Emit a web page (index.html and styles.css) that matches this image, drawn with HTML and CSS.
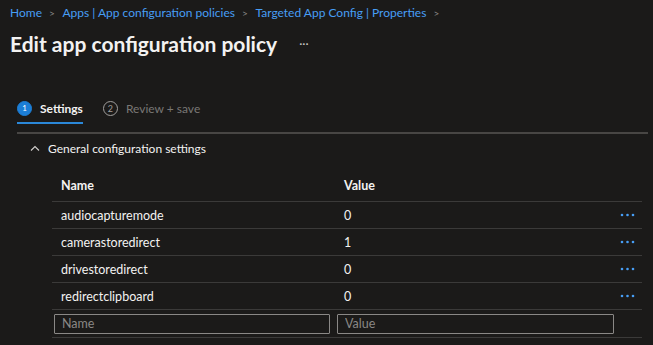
FILE: index.html
```html
<!DOCTYPE html>
<html lang="en">

<head>
    <meta charset="UTF-8">
    <meta name="viewport" content="width=device-width, initial-scale=1.0">
    <title>Edit app configuration policy</title>
    <link rel="stylesheet" href="styles.css">
</head>

<body>
    <!-- Breadcrumb -->
    <nav class="breadcrumb">
        <a href="#">Home</a><span class="sep">&gt;</span>
        <a href="#">Apps | App configuration policies</a><span class="sep">&gt;</span>
        <a href="#">Targeted App Config | Properties</a><span class="sep">&gt;</span>
    </nav>

    <div class="title-row">
        <h1>Edit app configuration policy</h1>
        <span class="more">&middot;&middot;&middot;</span>
    </div>

    <!-- Wizard steps -->
    <div class="steps">
        <div class="step active">
            <span class="num">1</span>
            <span class="label">Settings</span>
        </div>
        <div class="step">
            <span class="num">2</span>
            <span class="label">Review + save</span>
        </div>
    </div>

    <div class="content">
        <div class="section-head">
            <svg class="chevron" width="10" height="6" viewBox="0 0 10 6">
                <path d="M1 5.5 L5 1.5 L9 5.5" fill="none" stroke="#d2d0ce" stroke-width="1.1" />
            </svg>
            <span>General configuration settings</span>
        </div>

        <div class="grid">
            <div class="row head">
                <div class="cell">Name</div>
                <div class="cell">Value</div>
                <div class="cell"></div>
            </div>
            <div class="row">
                <div class="cell">audiocapturemode</div>
                <div class="cell">0</div>
                <div class="cell dots"><svg width="16" height="4" viewBox="0 0 16 4"><circle cx="2" cy="2" r="1.3"/><circle cx="7.5" cy="2" r="1.3"/><circle cx="13" cy="2" r="1.3"/></svg></div>
            </div>
            <div class="row">
                <div class="cell">camerastoredirect</div>
                <div class="cell">1</div>
                <div class="cell dots"><svg width="16" height="4" viewBox="0 0 16 4"><circle cx="2" cy="2" r="1.3"/><circle cx="7.5" cy="2" r="1.3"/><circle cx="13" cy="2" r="1.3"/></svg></div>
            </div>
            <div class="row">
                <div class="cell">drivestoredirect</div>
                <div class="cell">0</div>
                <div class="cell dots"><svg width="16" height="4" viewBox="0 0 16 4"><circle cx="2" cy="2" r="1.3"/><circle cx="7.5" cy="2" r="1.3"/><circle cx="13" cy="2" r="1.3"/></svg></div>
            </div>
            <div class="row">
                <div class="cell">redirectclipboard</div>
                <div class="cell">0</div>
                <div class="cell dots"><svg width="16" height="4" viewBox="0 0 16 4"><circle cx="2" cy="2" r="1.3"/><circle cx="7.5" cy="2" r="1.3"/><circle cx="13" cy="2" r="1.3"/></svg></div>
            </div>
            <div class="row inputs">
                <div class="cell"><input type="text" class="name-input" placeholder="Name"></div>
                <div class="cell"><input type="text" class="value-input" placeholder="Value"></div>
                <div class="cell"></div>
            </div>
        </div>
    </div>
</body>

</html>
```

FILE: styles.css
```css
/* General styles */
body {
    margin: 0;
    background-color: #1b1a19;
    color: #f3f2f1;
    font-family: "Segoe UI", Lato, sans-serif;
    font-size: 12px;
    overflow: hidden;
}

.breadcrumb {
    height: 26px;
    line-height: 26px;
    padding-left: 10px;
    white-space: nowrap;
}

.breadcrumb a {
    color: #479ef5;
    text-decoration: none;
}

.breadcrumb .sep {
    color: #8a8886;
    margin: 0 5px 0 7px;
    font-size: 10px;
}

.title-row {
    display: flex;
    align-items: center;
    height: 34px;
    padding-left: 10px;
}

h1 {
    margin: 0;
    font-size: 21px;
    font-weight: 700;
}

.more {
    color: #c8c6c4;
    font-size: 12px;
    margin-left: 22px;
}

/* Steps */
.steps {
    display: flex;
    gap: 20px;
    margin: 34px 0 0 17px;
    height: 30px;
}

.step {
    display: flex;
    align-items: center;
    gap: 8px;
    height: 28px;
    color: #797775;
}

.step .num {
    width: 13px;
    height: 13px;
    border-radius: 50%;
    border: 1px solid #a19f9d;
    color: #a19f9d;
    font-size: 9px;
    display: flex;
    align-items: center;
    justify-content: center;
}

.step.active {
    color: #f3f2f1;
    font-weight: 700;
    border-bottom: 2px solid #2b88d8;
}

.step.active .num {
    background-color: #1c7ed6;
    border-color: #1c7ed6;
    color: #fff;
    font-weight: 400;
    font-size: 8px;
}

/* Content */
.content {
    margin: 8px 5px 0 17px;
    border-top: 2px solid #484644;
}

.section-head {
    display: flex;
    align-items: center;
    height: 28px;
    padding-left: 13px;
    gap: 8px;
}

.grid {
    margin: 8px 0 0 35px;
    width: 590px;
    font-size: 12.5px;
}

.row {
    display: grid;
    grid-template-columns: 284px 284px 1fr;
    height: 26px;
    align-items: center;
    border-bottom: 1px solid #3b3a39;
}

.row.head {
    height: 31px;
    font-weight: 700;
}

.cell:first-child {
    padding-left: 9px;
}

.cell:nth-child(2) {
    padding-left: 8px;
}

.dots svg {
    display: block;
    fill: #479ef5;
}

.row.inputs {
    height: 27px;
}

.row.inputs .cell {
    padding-left: 0;
}

input[type="text"] {
    display: block;
    box-sizing: border-box;
    height: 20px;
    background-color: #1b1a19;
    border: 1px solid #8a8886;
    border-radius: 1px;
    color: #f3f2f1;
    font-family: inherit;
    font-size: 12.5px;
    padding: 0 7px;
}

input::placeholder {
    color: #8a8886;
}

.name-input {
    margin-left: 2px;
    width: 276px;
}

.value-input {
    margin-left: 1px;
    width: 277px;
}
```
